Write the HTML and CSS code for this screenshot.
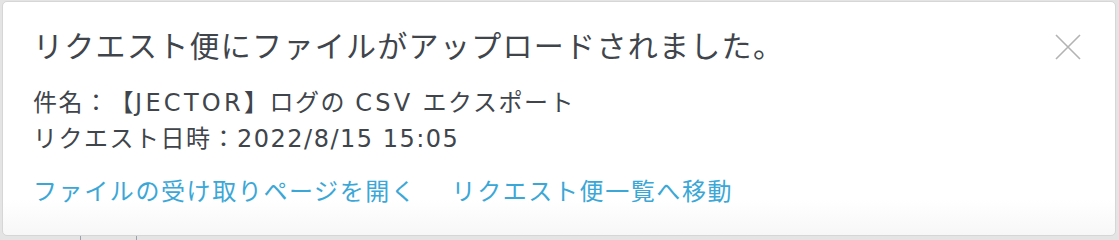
FILE: index.html
```html
<!DOCTYPE html>
<html lang="ja">
<head>
<meta charset="utf-8">
<link rel="stylesheet" href="styles.css">
</head>
<body>
<div class="page">
  <div class="toast">
    <div class="toast-head">
      <h1 class="title">リクエスト便にファイルがアップロードされました。</h1>
      <button class="close" aria-label="閉じる">
        <svg width="26" height="26" viewBox="0 0 26 26"><path d="M1 1 L25 25 M25 1 L1 25" stroke="#b3b3b3" stroke-width="1.6" fill="none"/></svg>
      </button>
    </div>
    <div class="meta">
      <div class="row">件名：【<span class="en">JECTOR</span>】ログの <span class="en">CSV</span> エクスポート</div>
      <div class="row">リクエスト日時：2022/8/15 15:05</div>
    </div>
    <div class="links">
      <a class="link" href="#">ファイルの受け取りページを開く</a>
      <a class="link" href="#">リクエスト便一覧へ移動</a>
    </div>
  </div>
  <div class="backdrop">
    <span class="tick"></span>
    <span class="tick"></span>
  </div>
</div>
</body>
</html>
```
FILE: styles.css
```css
html, body {
  margin: 0;
  padding: 0;
  background: #e4e4e4;
}
body {
  width: 1119px;
  height: 240px;
  overflow: hidden;
  font-family: "DejaVu Sans", "Noto Sans CJK JP", sans-serif;
  color: #40454c;
  text-spacing-trim: space-all;
}
.page {
  display: flex;
  flex-direction: column;
  padding: 1px 3px 0 2px;
}
.toast {
  height: 235px;
  box-sizing: border-box;
  background: linear-gradient(to bottom, #ffffff 0%, #ffffff 85%, #f7f7f7 100%);
  border: 1px solid #d6d6d6;
  border-radius: 5px;
  padding: 20px 0 0 30px;
}
.toast-head {
  display: flex;
  align-items: flex-start;
  justify-content: space-between;
}
.title {
  margin: 0;
  font-family: "Noto Sans CJK JP", sans-serif;
  font-weight: 400;
  font-size: 30px;
  line-height: 45px;
  letter-spacing: 1.3px;
  color: #40454c;
}
.close {
  border: 0;
  background: none;
  padding: 0;
  margin: 12px 34px 0 0;
  width: 26px;
  height: 26px;
  display: flex;
}
.meta {
  margin-top: 18px;
  display: flex;
  flex-direction: column;
}
.row {
  font-size: 24px;
  line-height: 36px;
  letter-spacing: 1.5px;
}
.en {
  letter-spacing: 3.3px;
}
.links {
  display: flex;
  gap: 35px;
  margin-top: 17px;
}
.link {
  font-size: 24px;
  line-height: 36px;
  letter-spacing: 1.6px;
  color: #3ba7d7;
  text-decoration: none;
}
.backdrop {
  height: 4px;
  display: flex;
  padding-left: 78px;
  gap: 55px;
}
.tick {
  width: 1px;
  height: 4px;
  background: #9aa2a8;
}
```
